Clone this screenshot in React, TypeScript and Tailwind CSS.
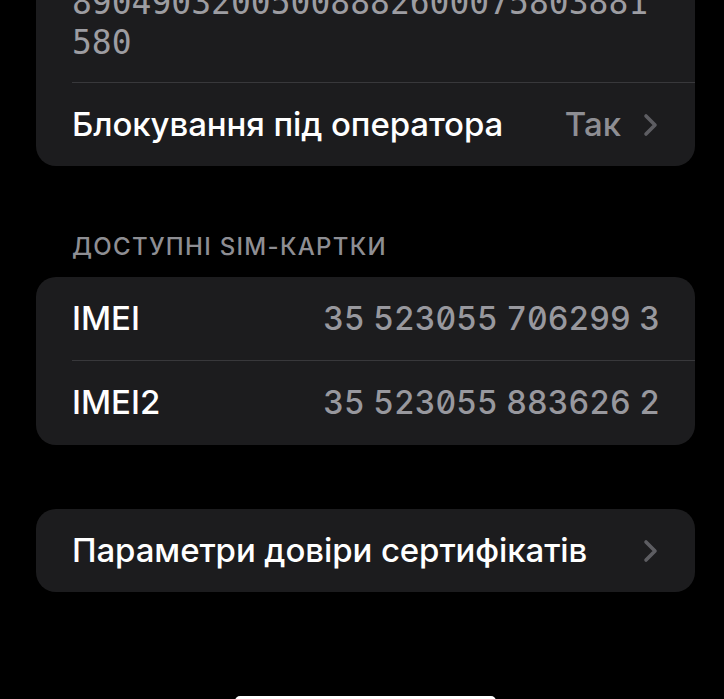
import React from "react";

function Chevron() {
  return (
    <svg width="17" height="24" viewBox="0 0 17 24" fill="none" className="shrink-0">
      <polyline
        points="4,3 13,12 4,21"
        stroke="#5d5d62"
        strokeWidth="3.6"
        strokeLinecap="round"
        strokeLinejoin="round"
      />
    </svg>
  );
}

function Divider() {
  return <div className="ml-[36px] h-px bg-[#38383b]"></div>;
}

export default function App() {
  return (
    <div className="min-h-[699px] h-[699px] overflow-hidden bg-black pl-[36px] pr-[29px] font-['Inter','Liberation_Sans',sans-serif] text-white">
      <div className="-mt-[36px] rounded-b-[20px] bg-[#1c1c1e]">
        <div className="pl-[36px] pr-[30px] py-[19px] font-['DejaVu_Sans_Mono','Liberation_Mono',monospace] text-[33px] leading-[40px] text-[#9d9da2] slashed-zero">
          89049032005008882600075803881
          <br />
          580
        </div>
        <Divider />
        <div className="flex h-[83px] items-center justify-between pl-[36px] pr-[36px]">
          <span className="text-[33px] font-medium tracking-[-0.1px]">Блокування під оператора</span>
          <div className="flex items-center gap-[21px]">
            <span className="text-[33px] font-medium text-[#8e8e93]">Так</span>
            <Chevron />
          </div>
        </div>
      </div>

      <div className="mt-[65px] mb-[14px] h-[32px] pl-[36px] text-[24px] font-medium leading-[32px] tracking-[1.3px] uppercase text-[#8e8e93]">
        Доступні SIM-картки
      </div>

      <div className="rounded-[20px] bg-[#1c1c1e]">
        <div className="flex h-[83px] items-center justify-between pl-[36px] pr-[35px]">
          <span className="text-[33px] font-medium">IMEI</span>
          <span className="text-[32px] font-medium tracking-[0px] text-[#98989e] tabular-nums slashed-zero">35 523055 706299 3</span>
        </div>
        <Divider />
        <div className="flex h-[84px] items-center justify-between pl-[36px] pr-[35px]">
          <span className="text-[33px] font-medium">IMEI2</span>
          <span className="text-[32px] font-medium tracking-[0px] text-[#98989e] tabular-nums slashed-zero">35 523055 883626 2</span>
        </div>
      </div>

      <div className="mt-[64px] flex h-[83px] items-center justify-between rounded-[20px] bg-[#1c1c1e] pl-[36px] pr-[36px]">
        <span className="text-[33px] font-medium tracking-[-0.1px]">Параметри довіри сертифікатів</span>
        <Chevron />
      </div>

      <div className="mt-[104px] ml-[199px] h-[10px] w-[261px] rounded-full bg-white"></div>
    </div>
  );
}
